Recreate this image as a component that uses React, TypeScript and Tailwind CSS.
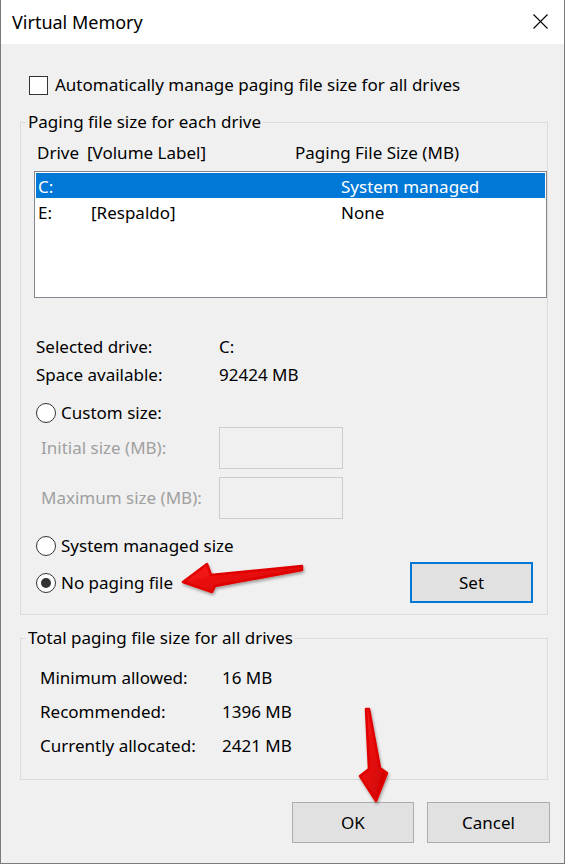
import React from "react";

function Radio({ checked = false }: { checked?: boolean }) {
  return (
    <span className="w-[20px] h-[20px] rounded-full border border-[#333] bg-white flex items-center justify-center shrink-0">
      {checked && <span className="w-[10px] h-[10px] rounded-full bg-[#333]"></span>}
    </span>
  );
}

export default function App() {
  return (
    <div className="w-[565px] h-[864px] relative bg-[#f0f0f0] border border-t-0 border-[#7a7a7a] flex flex-col font-['Noto_Sans',sans-serif] text-[17px] text-black overflow-hidden">
      {/* Title bar */}
      <div className="h-[44px] bg-white flex items-center justify-between pl-[11px] pr-[16px] shrink-0">
        <span className="text-[18px]">Virtual Memory</span>
        <svg width="15" height="15" viewBox="0 0 15 15" className="mt-[-1px]">
          <path d="M0.5 0.5 L14.5 14.5 M14.5 0.5 L0.5 14.5" stroke="#000" strokeWidth="1.1" fill="none" />
        </svg>
      </div>

      {/* Body */}
      <div className="flex-1 pl-[19px] pr-[16px] flex flex-col">
        <label className="mt-[26px] h-[30px] flex items-center pl-[9px]">
          <span className="w-[19px] h-[19px] border border-[#333] bg-white shrink-0"></span>
          <span className="ml-[7px]">Automatically manage paging file size for all drives</span>
        </label>

        {/* Paging file size for each drive */}
        <fieldset className="mt-[12px] border border-[#dcdcdc] pl-[13px] pb-[11px]">
          <legend className="ml-[-8px] px-[2px] h-[20px] leading-[20px]">Paging file size for each drive</legend>
          <div className="mt-[9px] h-[24px] flex items-center pl-[3px]">
            <span className="w-[50px]">Drive</span>
            <span className="w-[208px]">[Volume Label]</span>
            <span>Paging File Size (MB)</span>
          </div>
          <div className="mt-[6px] h-[127px] border border-[#828790] bg-white p-px">
            <div className="h-[25px] bg-[#0078d7] text-white flex items-center pt-[3px] pl-[2px]">
              <span className="w-[53px]">C:</span>
              <span className="w-[250px]"></span>
              <span>System managed</span>
            </div>
            <div className="h-[25px] flex items-center pt-[4px] pl-[2px]">
              <span className="w-[53px]">E:</span>
              <span className="w-[250px]">[Respaldo]</span>
              <span>None</span>
            </div>
          </div>

          <div className="mt-[35px] pl-[2px]">
            <div className="h-[28px] flex items-center">
              <span className="w-[183px]">Selected drive:</span>
              <span>C:</span>
            </div>
            <div className="h-[28px] flex items-center">
              <span className="w-[183px]">Space available:</span>
              <span>92424 MB</span>
            </div>
          </div>

          <div className="mt-[11px] h-[26px] flex items-center pl-[2px] gap-[5px]">
            <Radio />
            <span>Custom size:</span>
          </div>
          <div className="mt-[1px] flex items-center pl-[7px] text-[#a0a0a0]">
            <span className="w-[178px]">Initial size (MB):</span>
            <span className="w-[124px] h-[42px] border border-[#cccccc] bg-[#f0f0f0]"></span>
          </div>
          <div className="mt-[8px] flex items-center pl-[7px] text-[#a0a0a0]">
            <span className="w-[178px]">Maximum size (MB):</span>
            <span className="w-[124px] h-[42px] border border-[#cccccc] bg-[#f0f0f0]"></span>
          </div>

          <div className="mt-[14px] h-[26px] flex items-center pl-[2px] gap-[5px]">
            <Radio />
            <span>System managed size</span>
          </div>
          <div className="mt-[3px] h-[41px] flex items-center justify-between pl-[2px] pr-[14px]">
            <div className="flex items-center gap-[5px]">
              <Radio checked />
              <span>No paging file</span>
            </div>
            <button className="w-[123px] h-[41px] border-2 border-[#0078d7] bg-[#e1e1e1]">Set</button>
          </div>
        </fieldset>

        {/* Total paging file size for all drives */}
        <fieldset className="mt-[13px] border border-[#dcdcdc] pl-[19px] pb-[19px]">
          <legend className="ml-[-14px] px-[2px] h-[20px] leading-[20px]">Total paging file size for all drives</legend>
          <div className="mt-[16px] flex flex-col gap-[6px]">
            <div className="h-[28px] flex items-center">
              <span className="w-[182px]">Minimum allowed:</span>
              <span>16 MB</span>
            </div>
            <div className="h-[28px] flex items-center">
              <span className="w-[182px]">Recommended:</span>
              <span>1396 MB</span>
            </div>
            <div className="h-[28px] flex items-center">
              <span className="w-[182px]">Currently allocated:</span>
              <span>2421 MB</span>
            </div>
          </div>
        </fieldset>

        <div className="mt-[22px] flex justify-end gap-[13px] mr-[-2px]">
          <button className="w-[122px] h-[41px] border border-[#adadad] bg-[#e1e1e1]">OK</button>
          <button className="w-[123px] h-[41px] border border-[#adadad] bg-[#e1e1e1]">Cancel</button>
        </div>
      </div>

      {/* Red annotation arrows */}
      <svg className="absolute inset-0 pointer-events-none" width="565" height="865" viewBox="0 0 565 865">
        <defs>
          <linearGradient id="ar" x1="0" y1="0" x2="1" y2="1">
            <stop offset="0" stopColor="#ff1a1a" />
            <stop offset="1" stopColor="#c80000" />
          </linearGradient>
          <filter id="sh" x="-20%" y="-20%" width="140%" height="140%">
            <feDropShadow dx="1" dy="2" stdDeviation="1.5" floodColor="#000" floodOpacity="0.35" />
          </filter>
        </defs>
        <g filter="url(#sh)" fill="url(#ar)" stroke="#e00000" strokeWidth="2.5" strokeLinejoin="round">
          <polygon points="182,582 206,564 210,575 301,566 301,570 214,586 211,592" />
          <polygon points="365,709 368,709 379,768 386,773 375,801 359,776 368,769" />
        </g>
      </svg>
    </div>
  );
}
